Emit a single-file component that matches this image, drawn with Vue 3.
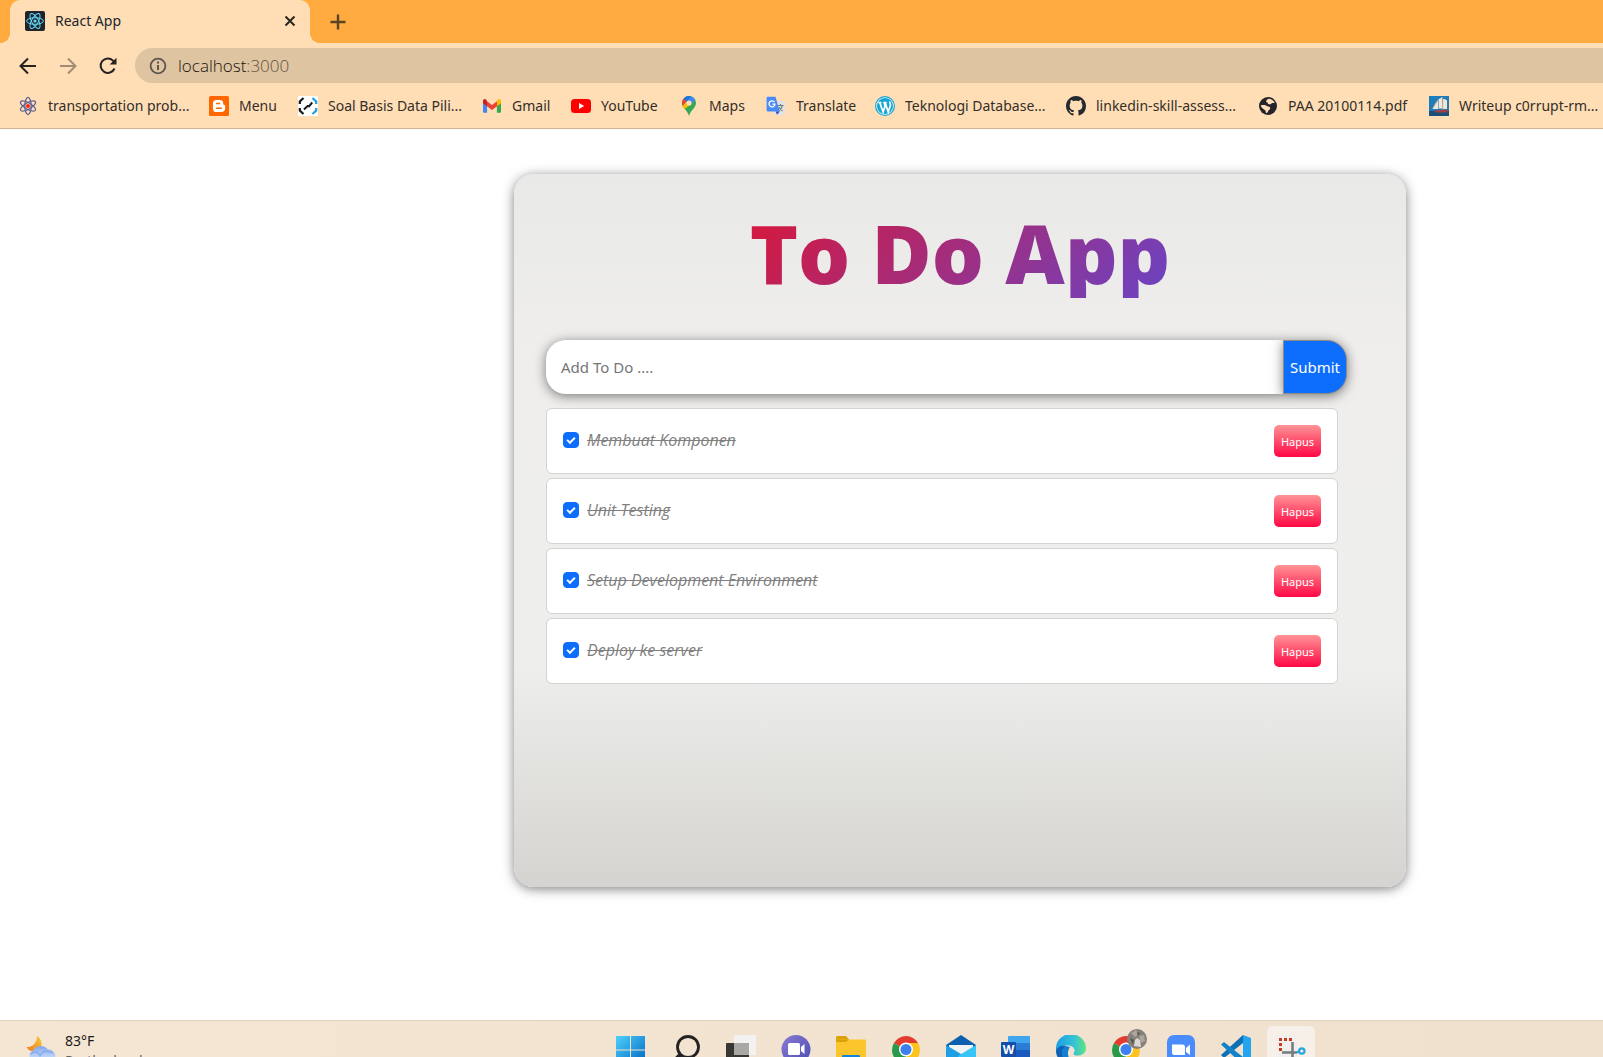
<script setup>
import { ref } from 'vue'

const bookmarks = [
  { icon: 'atom', title: 'transportation prob...', width: 191 },
  { icon: 'blogger', title: 'Menu', width: 89 },
  { icon: 'code', title: 'Soal Basis Data Pili...', width: 184 },
  { icon: 'gmail', title: 'Gmail', width: 89 },
  { icon: 'youtube', title: 'YouTube', width: 108 },
  { icon: 'maps', title: 'Maps', width: 87 },
  { icon: 'translate', title: 'Translate', width: 109 },
  { icon: 'wordpress', title: 'Teknologi Database...', width: 191 },
  { icon: 'github', title: 'linkedin-skill-assess...', width: 192 },
  { icon: 'globe', title: 'PAA 20100114.pdf', width: 171 },
  { icon: 'ship', title: 'Writeup c0rrupt-rm...', width: 180 }
]

const apps = [
  { id: 'windows', label: 'Start' },
  { id: 'search', label: 'Search' },
  { id: 'taskview', label: 'Task view' },
  { id: 'chat', label: 'Chat' },
  { id: 'folder', label: 'File Explorer' },
  { id: 'chrome', label: 'Chrome' },
  { id: 'mail', label: 'Mail' },
  { id: 'word', label: 'Word' },
  { id: 'edge', label: 'Edge' },
  { id: 'profile', label: 'Chrome profile' },
  { id: 'zoom', label: 'Zoom' },
  { id: 'vscode', label: 'Visual Studio Code' },
  { id: 'snip', label: 'Snipping Tool' }
]

const draft = ref('')
const todos = ref([
  { id: 1, title: 'Membuat Komponen', done: true },
  { id: 2, title: 'Unit Testing', done: true },
  { id: 3, title: 'Setup Development Environment', done: true },
  { id: 4, title: 'Deploy ke server', done: true }
])

function add() {
  const title = draft.value.trim()
  if (!title) return
  todos.value.push({ id: Date.now(), title, done: false })
  draft.value = ''
}

function remove(id) {
  todos.value = todos.value.filter((todo) => todo.id !== id)
}
</script>

<template>
  <div class="screen">
    <header class="browser">
      <div class="tabs">
        <div class="tab">
          <svg class="favicon" viewBox="0 0 20 20">
            <rect width="20" height="20" rx="2" fill="#20232a" />
            <g fill="none" stroke="#61dafb" stroke-width="1">
              <ellipse cx="10" cy="10" rx="8.4" ry="3.3" />
              <ellipse cx="10" cy="10" rx="8.4" ry="3.3" transform="rotate(60 10 10)" />
              <ellipse cx="10" cy="10" rx="8.4" ry="3.3" transform="rotate(120 10 10)" />
            </g>
            <circle cx="10" cy="10" r="1.6" fill="#61dafb" />
          </svg>
          <span class="tab-title">React App</span>
          <button class="icon-button" aria-label="Close tab">
            <svg width="12" height="12" viewBox="0 0 12 12"><path d="M1.5 1.5l9 9M10.5 1.5l-9 9" stroke="#2a2620" stroke-width="2" /></svg>
          </button>
        </div>
        <button class="icon-button new-tab" aria-label="New tab">
          <svg width="16" height="16" viewBox="0 0 16 16"><path d="M8 .5v15M.5 8h15" stroke="#5a4425" stroke-width="2.4" /></svg>
        </button>
      </div>

      <div class="toolbar">
        <button class="icon-button" aria-label="Back">
          <svg width="18" height="18" viewBox="0 0 18 18"><path d="M17 9H2M9 1.5L1.5 9 9 16.5" fill="none" stroke="#262220" stroke-width="2" /></svg>
        </button>
        <button class="icon-button" aria-label="Forward">
          <svg width="18" height="18" viewBox="0 0 18 18"><path d="M1 9h15M9 1.5L16.5 9 9 16.5" fill="none" stroke="#a08d76" stroke-width="2" /></svg>
        </button>
        <button class="icon-button" aria-label="Reload">
          <svg width="18" height="18" viewBox="0 0 18 18"><path d="M15.5 11.5A7.2 7.2 0 1 1 14 3.6L16 5.6" fill="none" stroke="#262220" stroke-width="2" /><path d="M17.5 .7V7.5H10.7z" fill="#262220" /></svg>
        </button>
        <div class="address">
          <svg width="18" height="18" viewBox="0 0 18 18"><circle cx="9" cy="9" r="7.4" fill="none" stroke="#5b564f" stroke-width="1.8" /><path d="M9 8v5M9 4.6v1.9" stroke="#5b564f" stroke-width="2" /></svg>
          <span class="url">localhost<span class="port">:3000</span></span>
        </div>
      </div>

      <nav class="bookmarks">
        <a v-for="b in bookmarks" :key="b.title" class="bookmark" href="#" :style="{ width: b.width + 'px' }">
          <svg class="favicon" viewBox="0 0 20 20">
            <template v-if="b.icon === 'atom'">
              <g fill="none" stroke="#5a5d94" stroke-width="1.2">
                <ellipse cx="10" cy="10" rx="8.6" ry="3.2" transform="rotate(30 10 10)" />
                <ellipse cx="10" cy="10" rx="8.6" ry="3.2" transform="rotate(90 10 10)" />
                <ellipse cx="10" cy="10" rx="8.6" ry="3.2" transform="rotate(150 10 10)" />
              </g>
              <circle cx="10" cy="10" r="2" fill="#f0281e" />
            </template>
            <template v-else-if="b.icon === 'blogger'">
              <rect width="20" height="20" rx="1.5" fill="#ff6600" />
              <path d="M7.5 4h3.3a3.4 3.4 0 0 1 3.4 3.2c0 1 .3 1.6 1.2 1.7.6.1.8.4.8 1V12a4 4 0 0 1-4 4H7.5a3.6 3.6 0 0 1-3.6-3.6V7.6A3.6 3.6 0 0 1 7.5 4z" fill="#fff" />
              <path d="M7.6 7.6h2.9M7.6 12.3h4.8" stroke="#ff6600" stroke-width="1.5" stroke-linecap="round" />
            </template>
            <template v-else-if="b.icon === 'code'">
              <rect width="20" height="20" fill="#fff" />
              <path d="M5.500 2L1.800 5.500v2.500M1.800 12v2.500L5.500 18" fill="none" stroke="#16181b" stroke-width="2.200" />
              <path d="M14.500 2l3.700 3.500v2.500M18.200 12v2.500L14.500 18" fill="none" stroke="#1ba0e2" stroke-width="2.200" />
              <path d="M6 13.500l3.500-3.500 1.500.3 3.200-3.800" fill="none" stroke="#16181b" stroke-width="2" />
            </template>
            <template v-else-if="b.icon === 'gmail'">
              <path d="M1 5v10.7c0 .6.5 1.1 1.1 1.1h3V8z" fill="#4285f4" />
              <path d="M19 5v10.7c0 .6-.5 1.1-1.1 1.1h-3V8z" fill="#34a853" />
              <path d="M5 5.2v5l5 3.7 5-3.7v-5L10 9z" fill="#ea4335" />
              <path d="M15 5.2v5l4-3V5c0-1.9-2-2.6-3.2-1.5z" fill="#fbbc04" />
              <path d="M5 5.2v5L1 7.2V5c0-1.9 2-2.6 3.2-1.5z" fill="#c5221f" />
            </template>
            <template v-else-if="b.icon === 'youtube'">
              <rect y="3" width="20" height="14" rx="3.5" fill="#ff0000" />
              <path d="M8 7l5.2 3L8 13z" fill="#fff" />
            </template>
            <template v-else-if="b.icon === 'maps'">
              <path d="M10 0a7 7 0 0 1 7 7c0 5-5.5 7-7 13-1.5-6-7-8-7-13a7 7 0 0 1 7-7z" fill="#34a853" />
              <path d="M4.700 2.500A7 7 0 0 1 12.200.4L6.100 8z" fill="#1a73e8" />
              <path d="M4.700 2.500L7.500 5 3.700 10A7 7 0 0 1 4.700 2.500z" fill="#ea4335" />
              <path d="M12.200.4A7 7 0 0 1 16.200 3.800L12 8.600 8 5z" fill="#4285f4" />
              <path d="M12.300 8.300L5.400 13C4.700 12 4 11 3.600 10L7.600 5.400z" fill="#fbbc04" />
              <circle cx="10" cy="7" r="2.600" fill="#ffdeb6" />
            </template>
            <template v-else-if="b.icon === 'translate'">
              <rect x="8" y="5" width="11" height="14" rx="1" fill="#e2e2e2" />
              <path d="M11.500 9.500h6M14.500 8v1.500M16.500 9.500c-.8 3-2.500 4.500-4 5.500M12.800 11c1 2 2.300 3 3.800 4" fill="none" stroke="#6f7c82" stroke-width="1.100" />
              <path d="M2 .7h7.500L13.800 15.500H2A1.400 1.400 0 0 1 .6 14V2A1.400 1.400 0 0 1 2 .7z" fill="#4a8af4" />
              <path d="M9.700 15.500h4.100L11 18.800z" fill="#3447b4" />
              <path d="M8.500 6.200A3 3 0 1 0 9 8.200H6.300" fill="none" stroke="#fff" stroke-width="1.300" />
            </template>
            <template v-else-if="b.icon === 'wordpress'">
              <circle cx="10" cy="10" r="9.400" fill="#f5fafc" stroke="#16a5d3" stroke-width="1.200" />
              <circle cx="10" cy="10" r="8" fill="#16a5d3" />
              <path d="M3.300 6.500h3.200M8.300 6.500h3.400M4.800 6.800l3.300 9.200 2-6-1-3.200M10.200 6.800l3 9.200 2.200-6.500c.3-1.500-.8-2.500-.5-4" fill="none" stroke="#fff" stroke-width="1.700" />
            </template>
            <template v-else-if="b.icon === 'github'">
              <path transform="scale(1.25)" fill="#24292f" d="M8 0C3.580 0 0 3.580 0 8c0 3.540 2.290 6.530 5.470 7.590.4.070.55-.17.55-.38 0-.19-.01-.82-.01-1.490-2.010.37-2.530-.49-2.690-.94-.09-.23-.48-.94-.82-1.130-.28-.15-.68-.52-.01-.53.63-.01 1.080.58 1.230.82.72 1.210 1.870.87 2.330.66.07-.52.28-.87.51-1.070-1.780-.2-3.640-.89-3.640-3.950 0-.87.31-1.590.82-2.150-.08-.2-.36-1.020.08-2.120 0 0 .67-.21 2.200.82.64-.18 1.320-.27 2-.27s1.360.09 2 .27c1.530-1.040 2.200-.82 2.200-.82.44 1.100.16 1.920.08 2.120.51.56.82 1.270.82 2.150 0 3.070-1.870 3.750-3.650 3.950.29.25.54.73.54 1.480 0 1.070-.01 1.930-.01 2.200 0 .21.15.46.55.38A8.010 8.010 0 0 0 16 8c0-4.420-3.580-8-8-8z" />
            </template>
            <template v-else-if="b.icon === 'globe'">
              <circle cx="10" cy="10" r="9" fill="#26242a" />
              <path d="M10.500 2.800c3 0 5.300 1.800 6.200 4-1.500.8-2.200-.3-3.200.6-.8.900-2.200 1.200-3.200.6-.8-.5-.4-1.500-1.500-1.700C7.300 6 8.500 3.500 10.500 2.800z" fill="#ffdeb6" />
              <path d="M2.800 9.300c2.500-.8 5-.4 6.200.8 1 .9 3.500.3 3.200 2.200-.2 1.700-2 1.700-2.200 3.200-.2.900-.8 1.500-1.700 1.600-.8-.6-.3-1.900-1.200-2.800C5.500 12.700 3 12 2.800 9.300z" fill="#ffdeb6" />
            </template>
            <template v-else>
              <rect width="20" height="20" fill="#1d7cba" />
              <rect y="15" width="20" height="5" fill="#1b5079" />
              <path d="M3.500 13C5 9 7 6 9 4l.5 9zM10 12.500L9.500 3c1 0 2.500-1 3.500-2l1 11.500zM14 13V3c1.500 0 3 .5 4 1.500V13z" fill="#eee7dc" />
              <path d="M4 12l5-8M13.700 1v13" stroke="#c2a26c" stroke-width=".8" />
              <path d="M5 14.500l14-1-1.500 3H7z" fill="#a83c46" />
            </template>
          </svg>
          <span>{{ b.title }}</span>
        </a>
      </nav>
    </header>

    <main class="page">
      <section class="card">
        <h1>To Do App</h1>
        <form class="entry" @submit.prevent="add">
          <input v-model="draft" type="text" placeholder="Add To Do ...." aria-label="Add To Do" />
          <button type="submit">Submit</button>
        </form>
        <ul class="todos">
          <li v-for="todo in todos" :key="todo.id">
            <label>
              <input v-model="todo.done" type="checkbox" />
              <span :class="{ done: todo.done }">{{ todo.title }}</span>
            </label>
            <button type="button" @click="remove(todo.id)">Hapus</button>
          </li>
        </ul>
      </section>
    </main>

    <footer class="taskbar">
      <div class="weather">
        <svg width="32" height="32" viewBox="0 0 32 32">
          <defs>
            <linearGradient id="moon" x1="1" y1="0" x2="0" y2="1"><stop stop-color="#f9c83a" /><stop offset="1" stop-color="#ee7d22" /></linearGradient>
            <linearGradient id="cloud" x2="0" y2="1"><stop stop-color="#83a7ec" /><stop offset="1" stop-color="#dcecff" /></linearGradient>
          </defs>
          <path d="M13 1c5 3 6 9 2.500 13-3.500 4-10.500 3-13-2 5 .5 10.500-3 10.500-11z" fill="url(#moon)" />
          <path d="M10 28a7 7 0 0 1-1-12.500A9 9 0 0 1 24 14.500a7 7 0 0 1 3 13.500z" fill="url(#cloud)" />
          <path d="M6 19c5-4 9-1 10 2 2-5 7-6 13-3" fill="none" stroke="#6f98e8" stroke-width="1.200" opacity=".6" />
        </svg>
        <div class="weather-text">
          <span class="degrees">83°F</span>
          <span class="sky">Partly cloudy</span>
        </div>
      </div>
      <div class="apps">
        <button v-for="app in apps" :key="app.id" class="app" :class="{ active: app.id === 'snip' }" :aria-label="app.label">
          <svg width="30" height="30" viewBox="0 0 30 30">
            <template v-if="app.id === 'windows'">
              <defs><linearGradient id="win" x2="1" y2="1"><stop stop-color="#4fd0fb" /><stop offset="1" stop-color="#0067c4" /></linearGradient></defs>
              <path d="M0 1h14v13.500H0zM15 1H29v13.500H15zM0 15.500h14V29H0zM15 15.500H29V29H15z" fill="url(#win)" />
            </template>
            <template v-else-if="app.id === 'search'">
              <circle cx="17" cy="12" r="10.500" fill="none" stroke="#232323" stroke-width="2.800" />
              <path d="M9.500 19.500L2 27" stroke="#232323" stroke-width="4" />
            </template>
            <template v-else-if="app.id === 'taskview'">
              <rect y="8" width="23" height="21" rx="1" fill="#393734" />
              <rect x="8" y="0" width="22" height="20" rx="1" fill="#f3f2f1" />
              <rect x="8" y="8" width="15" height="12" fill="#a9a8a5" />
            </template>
            <template v-else-if="app.id === 'chat'">
              <defs><linearGradient id="chat" x2="1" y2="1"><stop stop-color="#8b7bd0" /><stop offset="1" stop-color="#4a4cb4" /></linearGradient></defs>
              <circle cx="15" cy="14.500" r="14.500" fill="url(#chat)" />
              <rect x="7" y="8" width="12" height="12" rx="1.500" fill="#fff" />
              <path d="M20 12l3.500-3v10L20 16z" fill="#fff" />
            </template>
            <template v-else-if="app.id === 'folder'">
              <path d="M0 2.500A1.500 1.500 0 0 1 1.500 1H10l3 3.500V10H0z" fill="#dba108" />
              <rect y="4.500" width="30" height="23" rx="1" fill="#fdc52c" />
              <path d="M0 4.500h13l-3 2.500H0z" fill="#dba108" />
              <rect x="6" y="20" width="18" height="8" rx="1" fill="#1484d7" />
            </template>
            <template v-else-if="app.id === 'chrome' || app.id === 'profile'">
              <path d="M15 15L2.900 8A14 14 0 0 1 27.100 8z" fill="#e33b2e" />
              <path d="M15 15L27.100 8A14 14 0 0 1 15 29z" fill="#fcc31e" />
              <path d="M15 15V29A14 14 0 0 1 2.900 8z" fill="#2a9a48" />
              <path d="M15 8H27.100L20 15z" fill="#fcc31e" />
              <circle cx="15" cy="14.500" r="7" fill="#fff" />
              <circle cx="15" cy="14.500" r="5.500" fill="#3c80ee" />
            </template>
            <template v-else-if="app.id === 'mail'">
              <path d="M0 10L15 0l15 10v19H0z" fill="#0c60af" />
              <path d="M3 10h24v9H3z" fill="#f1f3f5" />
              <path d="M0 10l15 9v10H0z" fill="#1d9fe3" />
              <path d="M30 10l-18 11 6 8h12z" fill="#38c5f5" />
            </template>
            <template v-else-if="app.id === 'word'">
              <rect x="7" y="1" width="22" height="28" rx="1" fill="#41a5ee" />
              <path d="M7 8h22v7H7z" fill="#2b7cd3" />
              <path d="M7 15h22v14H7z" fill="#185abd" />
              <rect y="7" width="15" height="15" rx="1" fill="#134ea9" />
              <text x="7.500" y="18.500" class="word-mark" text-anchor="middle">W</text>
            </template>
            <template v-else-if="app.id === 'edge'">
              <defs><linearGradient id="edge" x2="1"><stop stop-color="#1b9de2" /><stop offset=".6" stop-color="#35c3d8" /><stop offset="1" stop-color="#5fe47c" /></linearGradient></defs>
              <path d="M0 14A15 14.500 0 0 1 30 13c0 6-5 7.500-8.500 7.500-4 0-4.500-1.500-3.500-3 2-3-1-7-6-7S1 12 0 17z" fill="url(#edge)" />
              <path d="M0 16c1-4 5-6 10-5-3 3-3 9 1 14l3 5C6 29 0 23 0 16z" fill="#0f62b4" />
              <path d="M10 11c-6 3-5 11 0 15l8 3c-6-5-8-11-4-17z" fill="#1480cf" />
            </template>
            <template v-else-if="app.id === 'zoom'">
              <rect x="1" y="0" width="28" height="29" rx="7" fill="#4a8cfb" />
              <path d="M6 9.500h10.500a2.500 2.500 0 0 1 2.500 2.500v8H8.500A2.500 2.500 0 0 1 6 17.500zM20 13l4-3.500v10.500l-4-3z" fill="#fff" />
            </template>
            <template v-else-if="app.id === 'vscode'">
              <path d="M22 0v8L3 23l-3-3z" fill="#0d70b5" />
              <path d="M0 9.500L3 7l19 15v8z" fill="#1283cb" />
              <path d="M22 0l8 3v24l-8 3z" fill="#24a4ef" />
            </template>
            <template v-else>
              <rect width="21" height="22" fill="#f1efee" />
              <path d="M3 3h3v3H3zM8 3h3v3H8zM13 3h3v3h-3zM3 8h3v3H3zM3 13h3v3H3z" fill="#c43b1e" />
              <path d="M6 17.500h15M16.500 7v21" stroke="#777c80" stroke-width="2.600" />
              <path d="M20 17.500l3-1" stroke="#27a6dc" stroke-width="2.200" />
              <circle cx="25.800" cy="16" r="2.700" fill="none" stroke="#27a6dc" stroke-width="2.200" />
            </template>
          </svg>
          <svg v-if="app.id === 'profile'" class="avatar" width="20" height="20" viewBox="0 0 20 20">
            <circle cx="10" cy="10" r="10" fill="#86817a" />
            <path d="M4 4l5-3 3 4-4 3zM12 7l5-1 1 6-4 2z" fill="#aaa59d" />
            <path d="M7 17l1-6 2-2 3 2 1 7z" fill="#dcd7d1" />
            <path d="M3 9l4 2-1 5zM10 3l3 1-2 3z" fill="#57524b" />
          </svg>
        </button>
      </div>
    </footer>
  </div>
</template>

<style>
body {
  margin: 0;
  background: #fff;
}
</style>

<style scoped>
.screen {
  display: flex;
  flex-direction: column;
  min-height: 100vh;
  overflow: hidden;
  font-family: "Noto Sans", "Open Sans", sans-serif;
  font-size: 15px;
  line-height: 24px;
  color: #212529;
}
* {
  box-sizing: border-box;
}
button {
  font-family: inherit;
  border: 0;
  padding: 0;
  cursor: pointer;
}
svg {
  display: block;
  flex: none;
}
.favicon {
  width: 20px;
  height: 20px;
}

/* browser chrome */
.browser {
  background: #ffdeb6;
  border-bottom: 1px solid #cdb491;
}
.tabs {
  display: flex;
  align-items: center;
  height: 43px;
  padding-left: 10px;
  background: #ffab40;
}
.tab {
  position: relative;
  display: flex;
  align-items: center;
  gap: 10px;
  width: 300px;
  height: 43px;
  padding: 0 12px 2px 15px;
  border-radius: 10px 10px 0 0;
  background: #ffdeb6;
  font-size: 14px;
}
.tab::before,
.tab::after {
  content: "";
  position: absolute;
  bottom: 0;
  width: 10px;
  height: 10px;
}
.tab::before {
  right: 100%;
  background: radial-gradient(circle at 0 0, #ffab40 10px, #ffdeb6 10px);
}
.tab::after {
  left: 100%;
  background: radial-gradient(circle at 100% 0, #ffab40 10px, #ffdeb6 10px);
}
.tab-title {
  flex: 1;
}
.icon-button {
  display: grid;
  place-items: center;
  width: 16px;
  height: 16px;
  background: none;
}
.new-tab {
  margin-left: 20px;
}
.toolbar {
  display: flex;
  align-items: center;
  gap: 24px;
  height: 40px;
  padding: 5px 0 0 19px;
}
.toolbar .icon-button {
  margin-bottom: 2px;
}
.address {
  display: flex;
  flex: 1;
  align-items: center;
  gap: 11px;
  height: 35px;
  margin-left: -4px;
  padding-left: 14px;
  border-radius: 18px 0 0 18px;
  background: #dec4a0;
}
.url {
  font-family: "Open Sans", "Noto Sans", sans-serif;
  font-size: 17px;
  font-weight: 300;
  color: #161412;
}
.port {
  color: #5e5142;
}
.bookmarks {
  display: flex;
  height: 45px;
  padding-left: 18px;
  align-items: center;
}
.bookmark {
  display: flex;
  flex: none;
  align-items: center;
  gap: 10px;
  color: #332e29;
  font-size: 14px;
  text-decoration: none;
  white-space: nowrap;
}

/* to-do page */
.page {
  flex: 1;
  padding: 45px 197px 132px 514px;
  background: #fff;
}
.card {
  min-height: 713px;
  padding: 32px;
  border-radius: 20px;
  background: linear-gradient(to top, #d5d4d0 0%, #d5d4d0 1%, #eeeeec 31%, #efeeec 75%, #e9e9e7 100%);
  box-shadow: 0 2px 12px rgba(0, 0, 0, 0.5);
}
h1 {
  width: fit-content;
  margin: 0 auto;
  font-family: "Open Sans", "Noto Sans", sans-serif;
  font-size: 82px;
  font-weight: 800;
  line-height: 92px;
  color: transparent;
  background: linear-gradient(135deg, #d8173a, #6a44c4);
  background-clip: text;
  -webkit-background-clip: text;
}
.entry {
  display: flex;
  margin: 42px 27px 0 0;
}
.entry input {
  flex: 1;
  min-width: 0;
  height: 54px;
  padding: 0 15px;
  border: 0;
  border-radius: 20px 0 0 20px;
  outline: 0;
  background: #fff;
  box-shadow: 0 2px 12px rgba(0, 0, 0, 0.5);
  font-family: inherit;
  font-size: 15px;
}
.entry input::placeholder {
  color: #757575;
}
.entry button {
  position: relative;
  width: 64px;
  height: 54px;
  border: 1px solid #8b8b8b;
  border-radius: 0 20px 20px 0;
  background: #0d6efd;
  box-shadow: 0 2px 12px rgba(0, 0, 0, 0.5);
  color: #fff;
  font-size: 15px;
}
.todos {
  display: grid;
  gap: 4px;
  margin: 14px 36px 0 0;
  padding: 0;
  list-style: none;
}
.todos li {
  display: flex;
  justify-content: space-between;
  align-items: center;
  height: 66px;
  padding: 0 16px;
  border: 1px solid #d3d3d3;
  border-radius: 6px;
  background: #fff;
}
.todos label {
  display: flex;
  align-items: center;
  gap: 8px;
  margin-bottom: 2px;
}
.todos input {
  display: grid;
  place-items: center;
  width: 16px;
  height: 16px;
  margin: 0;
  border: 1px solid #bfbfbf;
  border-radius: 4px;
  appearance: none;
}
.todos input:checked {
  border-color: #0d6efd;
  background: #0d6efd;
}
.todos input:checked::before {
  content: "";
  box-sizing: border-box;
  width: 8px;
  height: 5px;
  margin-bottom: 2px;
  border: solid #fff;
  border-width: 0 0 2px 2px;
  transform: rotate(-45deg);
}
.done {
  font-family: "Open Sans", "Noto Sans", sans-serif;
  font-size: 16px;
  color: #808080;
  font-style: italic;
  text-decoration: line-through;
}
.todos button {
  width: 47px;
  height: 32px;
  border-radius: 5px;
  background: linear-gradient(#ff9496, #ff0844);
  color: #fff;
  font-size: 11px;
}

/* taskbar */
.taskbar {
  display: flex;
  height: 37px;
  overflow: hidden;
  border-top: 1px solid #e0d3c2;
  background: linear-gradient(90deg, #f5e6d4, #f0e0ce);
}
.weather {
  display: flex;
  flex: none;
  gap: 9px;
  width: 607px;
  padding: 14px 0 0 24px;
}
.weather-text {
  display: flex;
  flex-direction: column;
  margin-top: -4px;
  font-size: 14px;
  line-height: 20px;
}
.degrees {
  color: #1c1a18;
}
.sky {
  color: #6b645c;
}
.apps {
  display: flex;
  gap: 7px;
  padding-top: 5px;
}
.app {
  position: relative;
  display: flex;
  justify-content: center;
  width: 48px;
  height: 48px;
  padding-top: 9px;
  border-radius: 5px;
  background: none;
}
.app.active {
  background: #f7f0e8;
}
.avatar {
  position: absolute;
  top: 3px;
  right: 3px;
}
.word-mark {
  fill: #fff;
  font-size: 12px;
  font-weight: 700;
}
</style>
